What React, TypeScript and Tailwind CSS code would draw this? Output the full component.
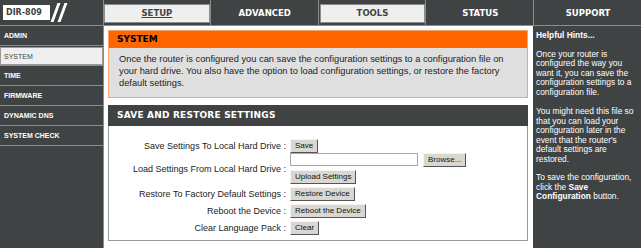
import React from "react";

const tabs = [
  { label: "SETUP", light: true, active: true },
  { label: "ADVANCED", light: false },
  { label: "TOOLS", light: true },
  { label: "STATUS", light: false },
  { label: "SUPPORT", light: false },
];

const menu = ["ADMIN", "SYSTEM", "TIME", "FIRMWARE", "DYNAMIC DNS", "SYSTEM CHECK"];

const Btn = ({ children }: { children: React.ReactNode }) => (
  <button className="h-[14px] px-[4px] bg-[#dad7d0] border border-t-[#f4f4f4] border-l-[#f4f4f4] border-r-[#555] border-b-[#555] text-[8px] leading-none text-[#111] whitespace-nowrap">
    {children}
  </button>
);

const Row = ({ label, children }: { label: string; children: React.ReactNode }) => (
  <div className="flex items-center">
    <div className="w-[181px] text-right pr-[4px] text-[9px] leading-[12px] text-[#222] whitespace-nowrap">
      {label}
    </div>
    <div className="flex">{children}</div>
  </div>
);

export default function App() {
  return (
    <div className="w-[641px] h-[248px] overflow-hidden bg-white flex flex-col text-[9px] leading-none font-['Liberation_Sans',Arial,sans-serif]">
      {/* top bar */}
      <div className="h-[26px] flex bg-[#404343] border-b border-[#8c8c8c]">
        <div className="w-[104px] border-r border-[#8c8c8c] flex items-center pl-[3px] gap-[4px]">
          <div className="h-[15px] w-[47px] bg-white flex items-center pl-[3px] font-['DejaVu_Sans',sans-serif] font-bold text-[8px] text-[#404343]">
            DIR-809
          </div>
          <div className="flex gap-[4px] h-[20px] items-center">
            <div className="w-[2.5px] h-[19px] bg-white skew-x-[-20deg]" />
            <div className="w-[2.5px] h-[19px] bg-white skew-x-[-20deg]" />
          </div>
        </div>
        <div className="flex-1 flex">
          {tabs.map((t, i) => (
            <div
              key={t.label}
              className={`flex-1 flex items-center justify-center pt-[1px] ${i > 0 ? "border-l border-[#8c8c8c] pl-[1px]" : ""}`}
            >
              {t.light ? (
                <div className="w-full h-[19px] bg-[#efefef] border border-[#8c8c8c] flex items-center justify-center">
                  <span
                    className={`font-['DejaVu_Sans',sans-serif] font-bold text-[8.5px] text-[#404343] ${t.active ? "underline" : ""}`}
                  >
                    {t.label}
                  </span>
                </div>
              ) : (
                <span className="font-['DejaVu_Sans',sans-serif] font-bold text-[8.5px] text-white">
                  {t.label}
                </span>
              )}
            </div>
          ))}
        </div>
      </div>

      <div className="flex-1 flex">
        {/* left menu */}
        <div className="w-[104px] bg-[#404343] border-r border-[#8c8c8c] flex flex-col">
          {menu.map((m) =>
            m === "SYSTEM" ? (
              <div key={m} className="h-[20px] border-b border-[#8c8c8c] pt-[1px]">
                <div className="h-[18px] bg-[#efefef] border border-[#999] flex items-center pl-[3px] text-[7px] text-[#404343]">
                  {m}
                </div>
              </div>
            ) : (
              <div
                key={m}
                className="h-[20px] border-b border-[#8c8c8c] flex items-center pl-[4px] text-[7px] font-bold text-white"
              >
                {m}
              </div>
            )
          )}
        </div>

        {/* main */}
        <div className="w-[429px] pl-[4px] pr-[5px] pt-[4px] flex flex-col gap-[7px]">
          <div className="border border-[#f7a56c]">
            <div className="h-[17px] bg-[#ff6600] flex items-center pl-[8px] font-['DejaVu_Sans',sans-serif] font-bold text-[9px] text-black">
              SYSTEM
            </div>
            <div className="bg-[#dfdfdf] pl-[10px] pt-[5px] pb-[8px] text-[9.3px] leading-[12px] text-[#222]">
              <div className="whitespace-nowrap">
                Once the router is configured you can save the configuration settings to a configuration file on
              </div>
              <div className="whitespace-nowrap">
                your hard drive. You also have the option to load configuration settings, or restore the factory
              </div>
              <div className="whitespace-nowrap">default settings.</div>
            </div>
          </div>

          <div className="flex flex-col h-[136px]">
            <div className="h-[21px] bg-[#404343] flex items-center pl-[9px] font-['DejaVu_Sans',sans-serif] font-bold text-[9px] tracking-[0.2px] text-white">
              SAVE AND RESTORE SETTINGS
            </div>
            <div className="flex-1 border border-t-0 border-[#9a9a9a] pt-[13px] flex flex-col">
              <Row label="Save Settings To Local Hard Drive :">
                <Btn>Save</Btn>
              </Row>
              <Row label="Load Settings From Local Hard Drive :">
                <div className="flex flex-col gap-[2px]">
                  <div className="flex items-start gap-[5px] h-[15px]">
                    <div className="w-[128px] h-[13px] bg-white border border-[#a8a8a8]" />
                    <Btn>Browse...</Btn>
                  </div>
                  <div className="flex">
                    <Btn>Upload Settings</Btn>
                  </div>
                </div>
              </Row>
              <div className="h-[3px]" />
              <Row label="Restore To Factory Default Settings :">
                <Btn>Restore Device</Btn>
              </Row>
              <div className="h-[3px]" />
              <Row label="Reboot the Device :">
                <Btn>Reboot the Device</Btn>
              </Row>
              <div className="h-[3px]" />
              <Row label="Clear Language Pack :">
                <Btn>Clear</Btn>
              </Row>
            </div>
          </div>
        </div>

        {/* hints */}
        <div className="flex-1 bg-[#404343] pl-[3px] pt-[5px] text-white text-[8.4px] leading-[9.6px] whitespace-nowrap">
          <div className="font-bold mb-[9px]">Helpful Hints...</div>
          <div className="mb-[9.5px]">
            <div>Once your router is</div>
            <div>configured the way you</div>
            <div>want it, you can save the</div>
            <div>configuration settings to a</div>
            <div>configuration file.</div>
          </div>
          <div className="mb-[8.5px]">
            <div>You might need this file so</div>
            <div>that you can load your</div>
            <div>configuration later in the</div>
            <div>event that the router's</div>
            <div>default settings are</div>
            <div>restored.</div>
          </div>
          <div>
            <div>To save the configuration,</div>
            <div>
              click the <b>Save</b>
            </div>
            <div>
              <b>Configuration</b> button.
            </div>
          </div>
        </div>
      </div>
    </div>
  );
}
